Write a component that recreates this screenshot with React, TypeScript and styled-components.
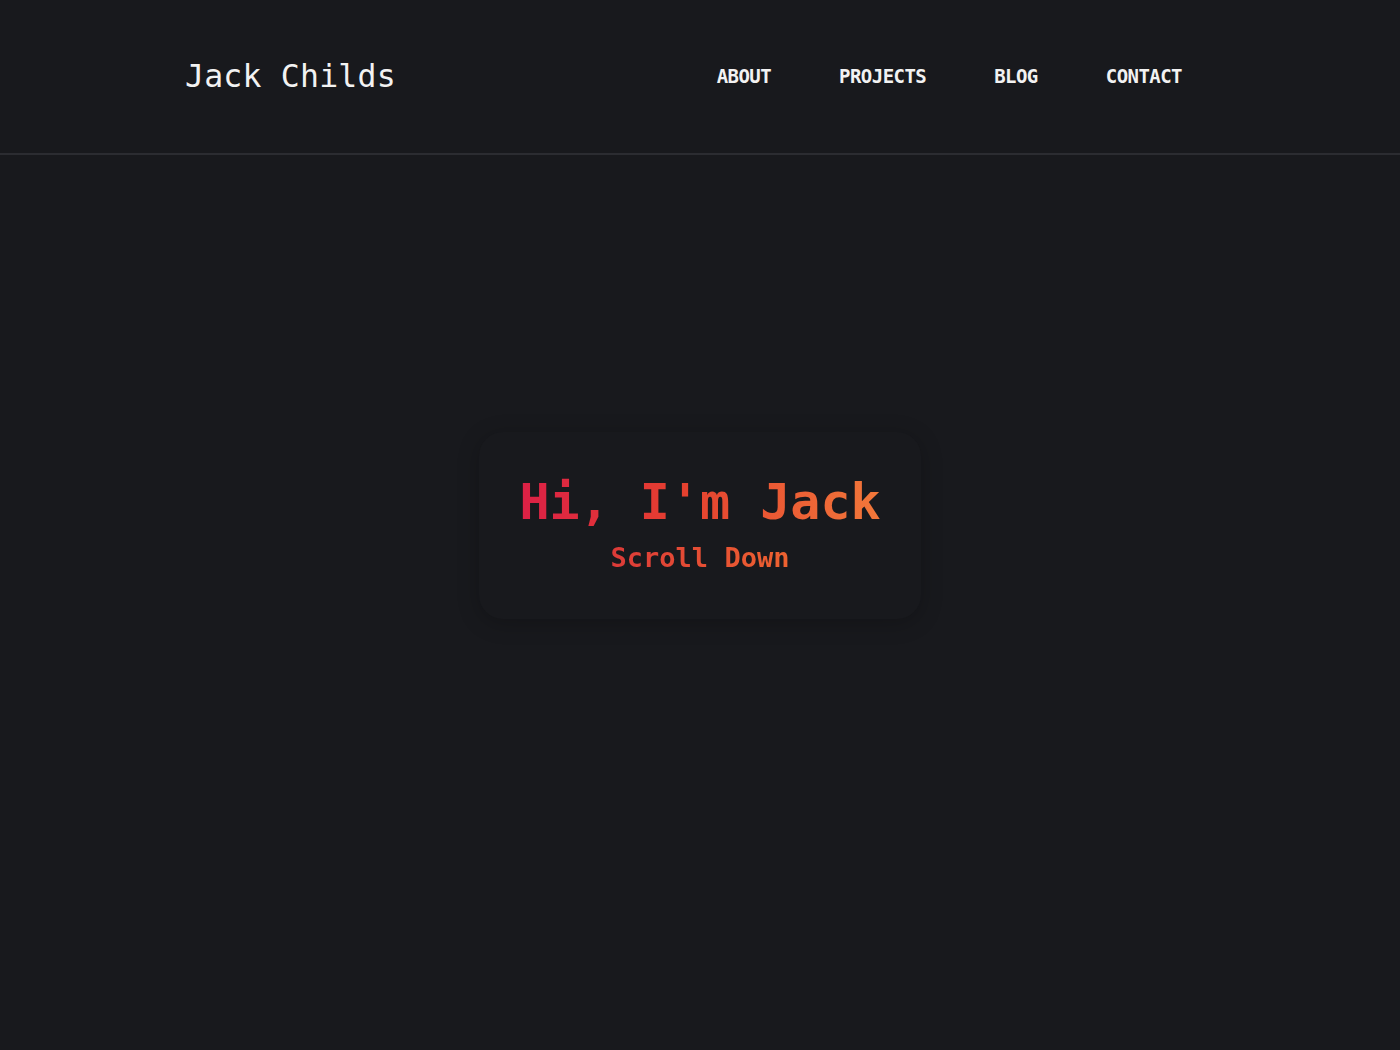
import React from "react";
import styled, { createGlobalStyle } from "styled-components";

const Global = createGlobalStyle`
  html, body { margin: 0; padding: 0; background: #18191d; }
  body { font-family: "DejaVu Sans Mono", "Liberation Mono", monospace; color: #f2f2f2; }
  * { box-sizing: border-box; }
`;

const Page = styled.div`
  min-height: 100vh;
  display: flex;
  flex-direction: column;
  background: #18191d;
`;

const Header = styled.header`
  height: 155px;
  border-bottom: 2px solid #2b2c31;
  display: flex;
  align-items: center;
  justify-content: center;
`;

const HeaderInner = styled.div`
  width: 1030px;
  display: flex;
  align-items: center;
  justify-content: space-between;
  padding-bottom: 2px;
`;

const Logo = styled.a`
  font-size: 31.5px;
  font-weight: 400;
  color: #f2f2f2;
  text-decoration: none;
  letter-spacing: 0.2px;
`;

const Nav = styled.nav`
  display: flex;
  align-items: center;
  margin-right: -1px;
`;

const NavLink = styled.a`
  font-size: 19px;
  font-weight: 700;
  color: #f2f2f2;
  text-decoration: none;
  padding: 0 34px;
  letter-spacing: -0.55px;
`;

const Hero = styled.main`
  flex: 1;
  display: flex;
  align-items: center;
  justify-content: center;
  padding-bottom: 155px;
`;

const Card = styled.section`
  width: 442px;
  padding: 40px 0 43px;
  border-radius: 24px;
  background: #18191d;
  box-shadow: 0 4px 22px rgba(0, 0, 0, 0.22);
  display: flex;
  flex-direction: column;
  align-items: center;
  gap: 8px;
`;

const gradient = `
  background-clip: text;
  -webkit-background-clip: text;
  color: transparent;
  -webkit-text-fill-color: transparent;
`;

const Title = styled.h1`
  margin: 0;
  font-size: 50px;
  font-weight: 700;
  line-height: 60px;
  background-image: linear-gradient(90deg, #dc2046 0%, #e5402f 45%, #f2783a 100%);
  ${gradient}
`;

const Subtitle = styled.p`
  margin: 0;
  font-size: 27px;
  font-weight: 700;
  line-height: 36px;
  background-image: linear-gradient(90deg, #dc3a38 0%, #ee6230 100%);
  ${gradient}
`;

export default function App() {
  return (
    <Page>
      <Global />
      <Header>
        <HeaderInner>
          <Logo href="#">Jack Childs</Logo>
          <Nav>
            <NavLink href="#">ABOUT</NavLink>
            <NavLink href="#">PROJECTS</NavLink>
            <NavLink href="#">BLOG</NavLink>
            <NavLink href="#">CONTACT</NavLink>
          </Nav>
        </HeaderInner>
      </Header>
      <Hero>
        <Card>
          <Title>Hi, I'm Jack</Title>
          <Subtitle>Scroll Down</Subtitle>
        </Card>
      </Hero>
    </Page>
  );
}
